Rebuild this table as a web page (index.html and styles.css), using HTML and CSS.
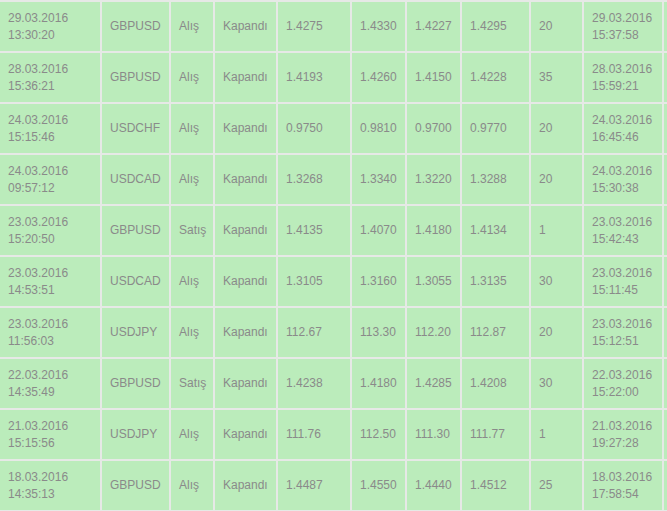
FILE: index.html
```html
<!DOCTYPE html>
<html lang="tr">
<head>
<meta charset="utf-8">
<title>İşlemler</title>
<link rel="stylesheet" href="styles.css">
</head>
<body>
<div class="wrap">
<table class="trades">
<colgroup>
<col class="c-open"><col class="c-sym"><col class="c-dir"><col class="c-st"><col class="c-p1"><col class="c-p2"><col class="c-p3"><col class="c-p4"><col class="c-pip"><col class="c-close"><col class="c-x">
</colgroup>
<tbody>
<tr><td>29.03.2016<br>13:30:20</td><td>GBPUSD</td><td>Alış</td><td>Kapandı</td><td>1.4275</td><td>1.4330</td><td>1.4227</td><td>1.4295</td><td>20</td><td>29.03.2016<br>15:37:58</td><td></td></tr>
<tr><td>28.03.2016<br>15:36:21</td><td>GBPUSD</td><td>Alış</td><td>Kapandı</td><td>1.4193</td><td>1.4260</td><td>1.4150</td><td>1.4228</td><td>35</td><td>28.03.2016<br>15:59:21</td><td></td></tr>
<tr><td>24.03.2016<br>15:15:46</td><td>USDCHF</td><td>Alış</td><td>Kapandı</td><td>0.9750</td><td>0.9810</td><td>0.9700</td><td>0.9770</td><td>20</td><td>24.03.2016<br>16:45:46</td><td></td></tr>
<tr><td>24.03.2016<br>09:57:12</td><td>USDCAD</td><td>Alış</td><td>Kapandı</td><td>1.3268</td><td>1.3340</td><td>1.3220</td><td>1.3288</td><td>20</td><td>24.03.2016<br>15:30:38</td><td></td></tr>
<tr><td>23.03.2016<br>15:20:50</td><td>GBPUSD</td><td>Satış</td><td>Kapandı</td><td>1.4135</td><td>1.4070</td><td>1.4180</td><td>1.4134</td><td>1</td><td>23.03.2016<br>15:42:43</td><td></td></tr>
<tr><td>23.03.2016<br>14:53:51</td><td>USDCAD</td><td>Alış</td><td>Kapandı</td><td>1.3105</td><td>1.3160</td><td>1.3055</td><td>1.3135</td><td>30</td><td>23.03.2016<br>15:11:45</td><td></td></tr>
<tr><td>23.03.2016<br>11:56:03</td><td>USDJPY</td><td>Alış</td><td>Kapandı</td><td>112.67</td><td>113.30</td><td>112.20</td><td>112.87</td><td>20</td><td>23.03.2016<br>15:12:51</td><td></td></tr>
<tr><td>22.03.2016<br>14:35:49</td><td>GBPUSD</td><td>Satış</td><td>Kapandı</td><td>1.4238</td><td>1.4180</td><td>1.4285</td><td>1.4208</td><td>30</td><td>22.03.2016<br>15:22:00</td><td></td></tr>
<tr><td>21.03.2016<br>15:15:56</td><td>USDJPY</td><td>Alış</td><td>Kapandı</td><td>111.76</td><td>112.50</td><td>111.30</td><td>111.77</td><td>1</td><td>21.03.2016<br>19:27:28</td><td></td></tr>
<tr><td>18.03.2016<br>14:35:13</td><td>GBPUSD</td><td>Alış</td><td>Kapandı</td><td>1.4487</td><td>1.4550</td><td>1.4440</td><td>1.4512</td><td>25</td><td>18.03.2016<br>17:58:54</td><td></td></tr>
</tbody>
</table>
</div>
</body>
</html>
```
FILE: styles.css
```css
html, body {
  margin: 0;
  padding: 0;
  background: #bbecbb;
}
body {
  width: 667px;
  height: 511px;
  overflow: hidden;
}
.wrap {
  width: 667px;
  overflow: hidden;
}
.trades {
  margin-left: -2px;
  border-collapse: separate;
  border-spacing: 2px;
  background: #e6e9e6;
  table-layout: fixed;
  width: 748px;
  font-family: "Liberation Sans", Arial, sans-serif;
  font-size: 12px;
  line-height: 17px;
  color: #8a8a8a;
}
.trades td {
  background: #bbecbb;
  height: 49px;
  padding: 0 0 0 8px;
  box-sizing: border-box;
  vertical-align: middle;
  text-align: left;
  white-space: nowrap;
  overflow: hidden;
}
.c-open { width: 100px; }
.c-sym { width: 67px; }
.c-dir { width: 42px; }
.c-st { width: 61px; }
.c-p1 { width: 72px; }
.c-p2 { width: 53px; }
.c-p3 { width: 53px; }
.c-p4 { width: 67px; }
.c-pip { width: 51px; }
.c-close { width: 78px; }
.c-x { width: 80px; }
```
